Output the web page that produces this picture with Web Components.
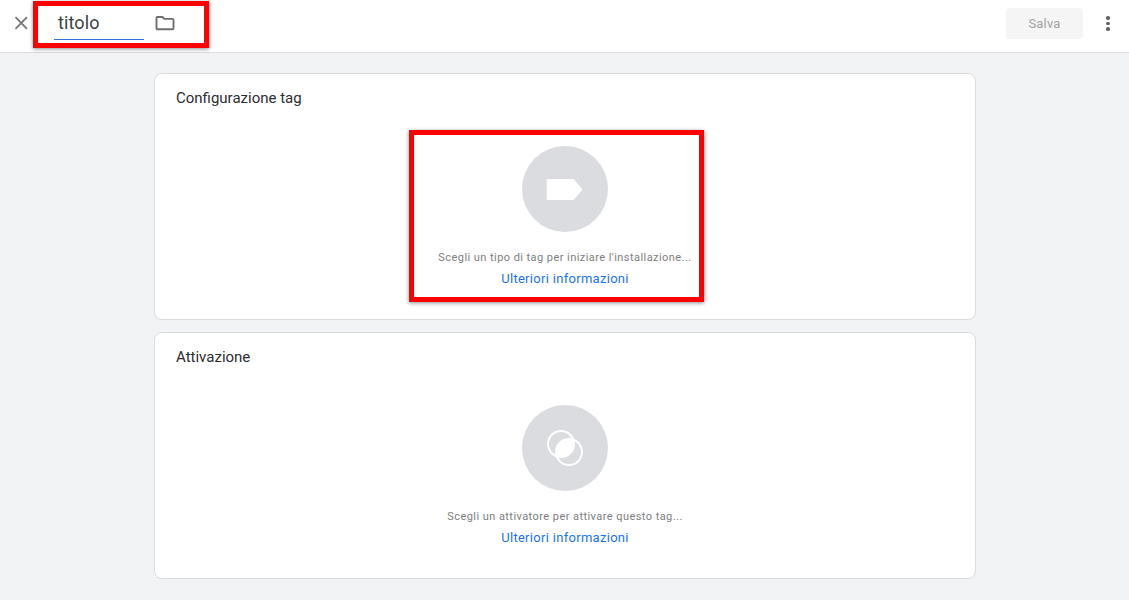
<!DOCTYPE html>
<html lang="it"><head><meta charset="utf-8"><title>Tag</title>
<style>
html,body{margin:0;height:100%}
body{background:#f1f3f4;font-family:Roboto,"Liberation Sans",sans-serif;overflow:hidden}
</style></head><body>
<tag-editor></tag-editor>
<template id="t-editor"><style>
:host{display:block;height:600px}
.cards{width:822px;margin:0 0 0 154px;padding-top:20px;display:flex;flex-direction:column;gap:12px}
</style>
<editor-bar></editor-bar>
<div class="cards">
<step-card heading="Configurazione tag" message="Scegli un tipo di tag per iniziare l'installazione..." icon="tag" framed></step-card>
<step-card heading="Attivazione" message="Scegli un attivatore per attivare questo tag..." icon="trigger"></step-card>
</div></template>
<template id="t-bar"><style>
:host{display:flex;align-items:flex-start;height:52px;background:#fff;border-bottom:1px solid #dadce0}
.close{width:14px;height:14px;margin:16px 0 0 14px;flex:none}
.frame{margin:1px 0 0 5px;width:176px;height:47px;box-sizing:border-box;border:5px solid #f00;box-shadow:0 1px 4px rgba(0,0,0,.45);display:flex;align-items:flex-start;flex:none}
.title{margin:5px 0 0 16px;width:90px;height:29px;box-sizing:border-box;border-bottom:1px solid #2f6fd8;font-size:18px;line-height:24px;padding-left:4px;color:#3c4043;letter-spacing:.12px}
.folder{width:20px;height:20px;margin:7px 0 0 11px;flex:none}
.save{margin:8px 0 0 auto;width:77px;height:31px;background:#f5f5f5;border-radius:4px;color:#a3a3a3;font-size:13px;line-height:31px;text-align:center;letter-spacing:.2px}
.more{width:3.5px;margin:16px 19.25px 0 23.25px;display:flex;flex-direction:column;gap:2.2px}
.more i{width:3.5px;height:3.5px;border-radius:50%;background:#5f6368}
</style>
<svg class="close" viewBox="0 0 14 14"><path d="M1.5 1.2L13 12.8M13 1.2L1.5 12.8" stroke="#757575" stroke-width="1.8" fill="none"/></svg>
<div class="frame"><div class="title">titolo</div>
<svg class="folder" viewBox="0 0 20 20"><path d="M2.5 4h5l1.8 1.9h8.2a1 1 0 0 1 1 1v8.4a1 1 0 0 1-1 1h-15a1 1 0 0 1-1-1V5a1 1 0 0 1 1-1z" fill="none" stroke="#6f6f6f" stroke-width="1.9"/></svg></div>
<div class="save">Salva</div>
<div class="more"><i></i><i></i><i></i></div></template>
<template id="t-card"><style>
:host{display:block;height:247px;box-sizing:border-box;background:#fff;border:1px solid #dadce0;border-radius:8px}
h2{margin:0;height:56px;box-sizing:border-box;padding:14px 0 0 21px;font-size:15px;line-height:20px;font-weight:400;color:#2b2d30}
.frame{width:295px;height:172px;box-sizing:border-box;margin:0 0 0 254px;border:5px solid transparent;display:flex;flex-direction:column;align-items:center;padding:11px 0 0 17px}
:host([framed]) .frame{border-color:#f00;box-shadow:0 1px 4px rgba(0,0,0,.45)}
.circle{width:86px;height:86px;border-radius:50%;background:#dadce0;display:flex;align-items:center;justify-content:center;flex:none}
.msg{margin-top:18px;font-size:11px;line-height:16px;color:#7d7d7d;letter-spacing:.44px;white-space:nowrap}
a{margin-top:5px;font-size:13px;line-height:16px;color:#1a73e8;text-decoration:none;letter-spacing:.3px;white-space:nowrap}
svg{display:block}
.circle svg.tag{transform:translateX(-.5px)}
</style>
<h2></h2><div class="frame"><div class="circle"></div><div class="msg"></div><a href="#">Ulteriori informazioni</a></div></template>
<script>
const mount=(el,id)=>{el.attachShadow({mode:'open'}).appendChild(document.getElementById(id).content.cloneNode(true));return el.shadowRoot};
const icons={
tag:'<svg class="tag" width="36" height="21" viewBox="0 0 36 21"><path d="M0 0H27L36 10.5L27 21H0Z" fill="#fff"/></svg>',
trigger:'<svg width="40" height="40" viewBox="0 0 40 40"><circle cx="16" cy="16" r="13" fill="none" stroke="#fff" stroke-width="2"/><circle cx="24" cy="24" r="13" fill="none" stroke="#fff" stroke-width="2"/><path d="M28.27 11.73A13 13 0 0 1 11.73 28.27A13 13 0 0 1 28.27 11.73Z" fill="#fff"/></svg>'};
customElements.define('tag-editor',class extends HTMLElement{connectedCallback(){if(!this.shadowRoot)mount(this,'t-editor')}});
customElements.define('editor-bar',class extends HTMLElement{connectedCallback(){if(!this.shadowRoot)mount(this,'t-bar')}});
customElements.define('step-card',class extends HTMLElement{connectedCallback(){if(this.shadowRoot)return;const r=mount(this,'t-card');
r.querySelector('h2').textContent=this.getAttribute('heading');r.querySelector('.msg').textContent=this.getAttribute('message');r.querySelector('.circle').innerHTML=icons[this.getAttribute('icon')]}});
</script></body></html>
